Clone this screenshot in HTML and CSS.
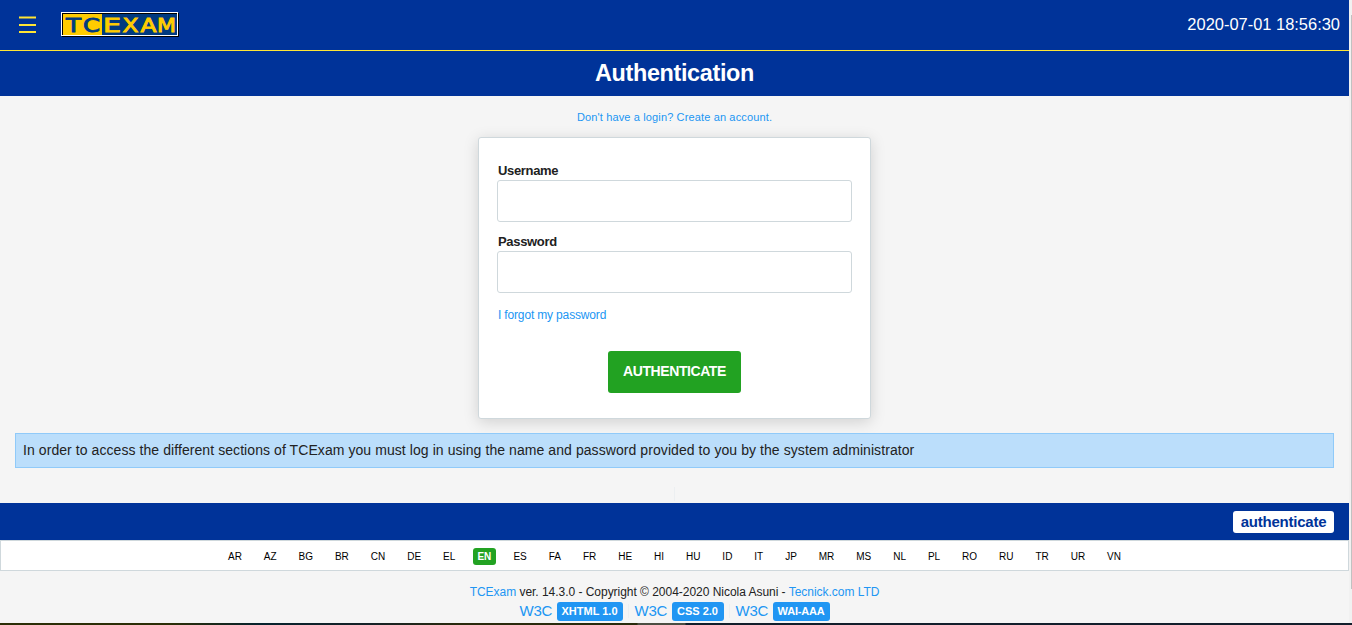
FILE: index.html
```html
<!DOCTYPE html>
<html lang="en">
<head>
<meta charset="utf-8">
<title>Authentication</title>
<link rel="stylesheet" href="styles.css">
</head>
<body>
<div class="window">
<div class="page">
  <header class="topbar">
    <div class="brand">
      <svg class="menu" width="17" height="17" viewBox="0 0 17 17"><path d="M0 1.5H17M0 9H17M0 16H17" stroke="#ffe535" stroke-width="2"/></svg>
      <svg class="logo" width="118" height="25" viewBox="0 0 118 25" shape-rendering="crispEdges">
        <rect x="1" y="1" width="117" height="24" fill="#000"/>
        <rect width="117" height="24" fill="#fff"/>
        <rect x="1" y="1" width="115" height="22" fill="#000"/>
        <rect x="2" y="2" width="39" height="21" fill="#fc0"/>
        <rect x="41" y="2" width="75" height="21" fill="#003a80"/>
        <g class="logo-text">
          <g class="on-yellow">
            <text y="19.5" x="5" textLength="15" lengthAdjust="spacingAndGlyphs">T</text>
            <text y="19.5" x="22" textLength="17" lengthAdjust="spacingAndGlyphs">C</text>
          </g>
          <g class="on-blue">
            <text y="19.5" x="42" textLength="18" lengthAdjust="spacingAndGlyphs">E</text>
            <text y="19.5" x="61.5" textLength="16" lengthAdjust="spacingAndGlyphs">X</text>
            <text y="19.5" x="79.5" textLength="16" lengthAdjust="spacingAndGlyphs">A</text>
            <text y="19.5" x="96" textLength="19" lengthAdjust="spacingAndGlyphs">M</text>
          </g>
        </g>
      </svg>
    </div>
    <span class="clock">2020-07-01 18:56:30</span>
  </header>
  <h1 class="title">Authentication</h1>
  <main class="content">
    <a class="register">Don't have a login? Create an account.</a>
    <form class="card">
      <label class="label" for="user">Username</label>
      <input class="field" id="user" type="text">
      <label class="label label-next" for="pass">Password</label>
      <input class="field" id="pass" type="password">
      <a class="forgot">I forgot my password</a>
      <button class="submit" type="button">AUTHENTICATE</button>
    </form>
    <p class="notice"><span class="notice-text">In order to access the different sections of TCExam you must log in using the name and password provided to you by the system administrator</span></p>
    <span class="divider"></span>
  </main>
  <div class="userbar"><span class="tag">authenticate</span></div>
  <nav class="langs">
    <span>AR</span><span>AZ</span><span>BG</span><span>BR</span><span>CN</span><span>DE</span><span>EL</span><span class="current">EN</span><span>ES</span><span>FA</span><span>FR</span><span>HE</span><span>HI</span><span>HU</span><span>ID</span><span>IT</span><span>JP</span><span>MR</span><span>MS</span><span>NL</span><span>PL</span><span>RO</span><span>RU</span><span>TR</span><span>UR</span><span>VN</span>
  </nav>
  <footer class="footer">
    <div class="copyright"><a>TCExam</a> ver. 14.3.0 - Copyright © 2004-2020 Nicola Asuni - <a>Tecnick.com LTD</a></div>
    <div class="badges">
      <a class="w3c"><span>W3C</span><b class="b-xhtml">XHTML 1.0</b></a><i></i>
      <a class="w3c"><span>W3C</span><b class="b-css">CSS 2.0</b></a><i></i>
      <a class="w3c"><span>W3C</span><b class="b-wai">WAI-AAA</b></a>
    </div>
  </footer>
</div>
<div class="scrollbar"><div class="thumb"></div></div>
</div>
<div class="edge"></div>
</body>
</html>
```
FILE: styles.css
```css
* { box-sizing: border-box; }
body { margin: 0; height: 625px; overflow: hidden; background: #f5f5f5; color: #222; font-family: "Liberation Sans", Arial, sans-serif; }
a { color: #2196f3; text-decoration: none; }
.window { display: flex; height: 623px; }
.page { width: 1349px; }
.scrollbar { width: 3px; background: #f1f1f1; padding: 15px 0 0 2px; }
.thumb { height: 574px; background: #c1c1c1; }
.edge { height: 2px; background: linear-gradient(90deg, #2b2e07 0, #2b2e07 170px, #06222d 260px, #152127 370px, #292a0c 460px, #292a0c 637px, #4b4d42 638px, #4b4d42 685px, #121e2b 686px); }
.topbar { display: flex; justify-content: space-between; height: 51px; background: #039; border-bottom: 1px solid #ffe535; padding: 0 9px 0 19px; }
.brand { display: flex; align-items: flex-start; }
.menu { margin: 16px 25px 0 0; }
.logo { margin-top: 12px; }
.logo-text { font: 19.5px "DejaVu Sans", sans-serif; stroke-width: .9px; }
.on-yellow { fill: #003a80; stroke: #003a80; }
.on-blue { fill: #fc0; stroke: #fc0; }
.clock { color: #fff; font-size: 16.45px; line-height: 49px; }
.title { margin: 0; height: 45px; background: #039; color: #fff; font-size: 23.4px; line-height: 44px; letter-spacing: -.35px; text-align: center; }
.content { display: flex; flex-direction: column; align-items: center; height: 407px; padding: 14px 15px 0; }
.register { font-size: 11px; line-height: 14px; letter-spacing: .14px; }
.card { display: flex; flex-direction: column; width: 393px; height: 282px; margin-top: 13px; padding: 25px 18px 0; background: #fff; border: 1px solid #cfd8dc; border-radius: 3px; box-shadow: 0 3px 15px rgba(0,0,0,.15); }
.label { font-size: 13px; font-weight: bold; line-height: 15px; letter-spacing: -.33px; margin: 0 0 2px 1px; color: #212121; }
.label-next { margin-top: 12px; }
.field { width: 355px; height: 42px; border: 1px solid #cfd8dc; border-radius: 3px; padding: 8px; background: #fff; }
.forgot { font-size: 12px; line-height: 14px; letter-spacing: -.16px; margin: 15px 0 0 1px; }
.submit { align-self: center; width: 133px; height: 42px; margin-top: 29px; padding: 0 0 2px; border: 0; border-radius: 3px; background: #22a222; color: #fff; font: bold 14px "Liberation Sans", Arial, sans-serif; letter-spacing: -.42px; }
.notice { width: 1319px; height: 35px; margin: 14px 0 0; padding: 0 7px; background: #bbdefb; border: 1px solid #90caf9; font-size: 14px; line-height: 33px; }
.notice-text { letter-spacing: .073px; }
.divider { width: 1px; height: 14px; margin-top: 19px; background: #eceff1; }
.userbar { display: flex; justify-content: flex-end; height: 37px; background: #039; padding: 8px 15px 0; }
.tag { width: 101px; height: 22px; background: #fff; color: #039; border-radius: 3px; font-size: 15px; font-weight: bold; line-height: 22px; letter-spacing: -.22px; text-align: center; }
.langs { display: flex; justify-content: space-between; align-items: center; height: 31px; background: #fff; border: 1px solid #cfd8dc; padding: 1px 227px 0; font-size: 10px; color: #000; }
.current { background: #22a222; color: #fff; font-weight: bold; border-radius: 3px; height: 17px; line-height: 17px; padding: 0 4.6px; margin: 0 -4.4px; }
.footer { text-align: center; padding-top: 13px; }
.copyright { font-size: 12px; line-height: 16px; letter-spacing: -.03px; }
.badges { display: flex; justify-content: center; margin-top: 2px; font-size: 15px; line-height: 18px; }
.badges i { width: 1px; height: 14px; margin: 2px 6px 0 5px; background: #eceff1; }
.w3c { display: flex; gap: 4px; }
.w3c span { width: 33px; letter-spacing: -.2px; text-align: left; }
.w3c b { background: #2196f3; color: #fff; height: 19px; line-height: 19px; border-radius: 3px; font-size: 11px; text-align: center; }
.b-xhtml { width: 66px; }
.b-css { width: 52px; }
.b-wai { width: 57px; letter-spacing: -.2px; }
```
